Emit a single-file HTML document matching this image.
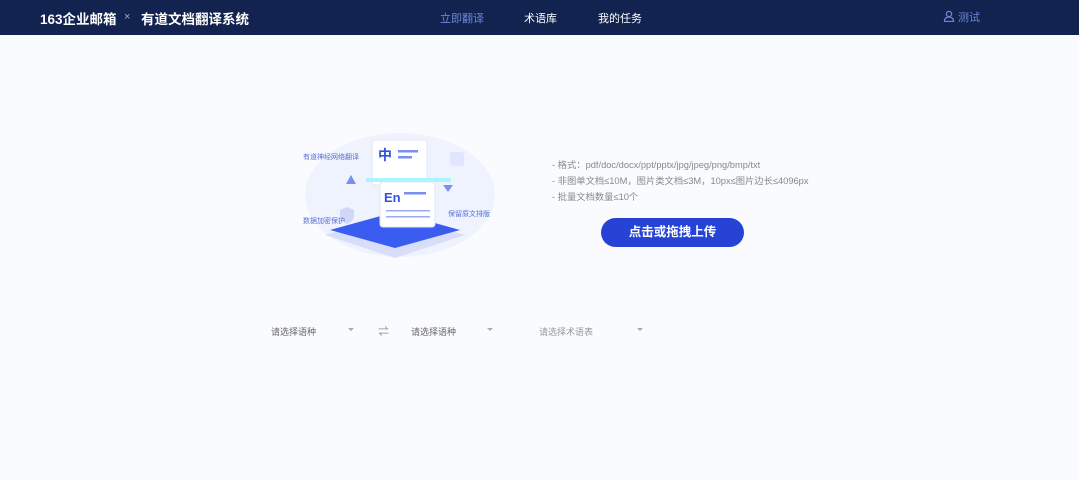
<!DOCTYPE html>
<html><head><meta charset="utf-8"><style>
*{margin:0;padding:0;box-sizing:border-box}
body{width:1079px;height:480px;background:#fafbfe;font-family:"Liberation Sans","Noto Sans CJK SC",sans-serif;position:relative;overflow:hidden}
.hd{position:absolute;left:0;top:0;width:1079px;height:35px;background:#12234f;color:#fff}
.hd span{position:absolute;top:8px;font-size:13px}
.t{font-weight:bold;font-size:13.5px!important}
.tip{position:absolute;left:552px;font-size:9.3px;color:#888}
.btn{position:absolute;left:601px;top:218px;width:143px;height:29px;border-radius:15px;background:#2743d6;color:#fff;font-weight:bold;font-size:12.5px;text-align:center;line-height:29px}
.sel{position:absolute;top:325px;font-size:9px;color:#666}
.ar{position:absolute;top:328px;width:0;height:0;border-left:3px solid transparent;border-right:3px solid transparent;border-top:3px solid #aaa}
.lb{position:absolute;font-size:7px;color:#5a6fd8}
</style></head><body>
<div class="hd">
<span class="t" style="left:40px">163企业邮箱</span>
<span style="left:124px;top:11px;font-size:11px;color:#aab">×</span>
<span class="t" style="left:141px">有道文档翻译系统</span>
<span style="left:440px;font-size:11px;top:10px;color:#6f86d8">立即翻译</span>
<span style="left:524px;font-size:11px;top:10px">术语库</span>
<span style="left:598px;font-size:11px;top:10px">我的任务</span>
<span style="left:943px;font-size:11px;top:9px;color:#6f86d8">
<svg width="12" height="12" viewBox="0 0 12 12" style="vertical-align:-1px"><circle cx="6" cy="4" r="2.6" fill="none" stroke="#6f86d8" stroke-width="1.3"/><path d="M1.5 11.5c0-3 2-4.5 4.5-4.5s4.5 1.5 4.5 4.5z" fill="none" stroke="#6f86d8" stroke-width="1.3"/></svg> 测试</span>
</div>
<svg style="position:absolute;left:300px;top:130px" width="200" height="130" viewBox="0 0 200 130">
<ellipse cx="100" cy="65" rx="95" ry="62" fill="#eef3fd"/>
<path d="M25 105 L95 85 L165 105 L95 128 Z" fill="#d8defa"/>
<path d="M30 100 L95 82 L160 100 L95 118 Z" fill="#3a5cf0"/>
<rect x="72" y="10" width="55" height="45" rx="3" fill="#fff" stroke="#e0e6fb"/>
<text x="78" y="30" font-size="14" font-weight="bold" fill="#3450e0" font-family="Noto Sans CJK SC">中</text>
<rect x="98" y="20" width="20" height="2.5" fill="#7a8ff0"/><rect x="98" y="26" width="14" height="2.5" fill="#7a8ff0"/>
<rect x="66" y="48" width="85" height="4" fill="#aaf4ff"/>
<rect x="80" y="52" width="55" height="45" rx="3" fill="#fff" stroke="#e0e6fb"/>
<text x="84" y="72" font-size="13" font-weight="bold" fill="#3450e0" font-family="Liberation Sans">En</text>
<rect x="104" y="62" width="22" height="2.5" fill="#7a8ff0"/>
<rect x="86" y="80" width="44" height="1.5" fill="#9aaaf0"/><rect x="86" y="86" width="44" height="1.5" fill="#9aaaf0"/>
<path d="M46 54 L51 45 L56 54Z" fill="#7a8ff0"/><path d="M143 55 L153 55 L148 62Z" fill="#7a8ff0"/>
<rect x="150" y="22" width="14" height="14" rx="3" fill="#dfe6fd"/>
<path d="M40 80 l7-3 7 3 v6 q0 5 -7 8 q-7-3-7-8z" fill="#cfd8fb"/>
</svg>
<div class="lb" style="left:303px;top:152px">有道神经网络翻译</div>
<div class="lb" style="left:303px;top:216px">数据加密保护</div>
<div class="lb" style="left:448px;top:209px">保留原文排版</div>
<div class="tip" style="top:157px">- 格式：pdf/doc/docx/ppt/pptx/jpg/jpeg/png/bmp/txt</div>
<div class="tip" style="top:173px">- 非图单文档≤10M，图片类文档≤3M，10px≤图片边长≤4096px</div>
<div class="tip" style="top:189px">- 批量文档数量≤10个</div>
<div class="btn">点击或拖拽上传</div>
<div class="sel" style="left:271px">请选择语种</div><div class="ar" style="left:348px"></div>
<div class="sel" style="left:378px;top:323px;font-size:11px;color:#888">⇌</div>
<div class="sel" style="left:411px">请选择语种</div><div class="ar" style="left:487px"></div>
<div class="sel" style="left:539px;color:#999">请选择术语表</div><div class="ar" style="left:637px"></div>
</body></html>
